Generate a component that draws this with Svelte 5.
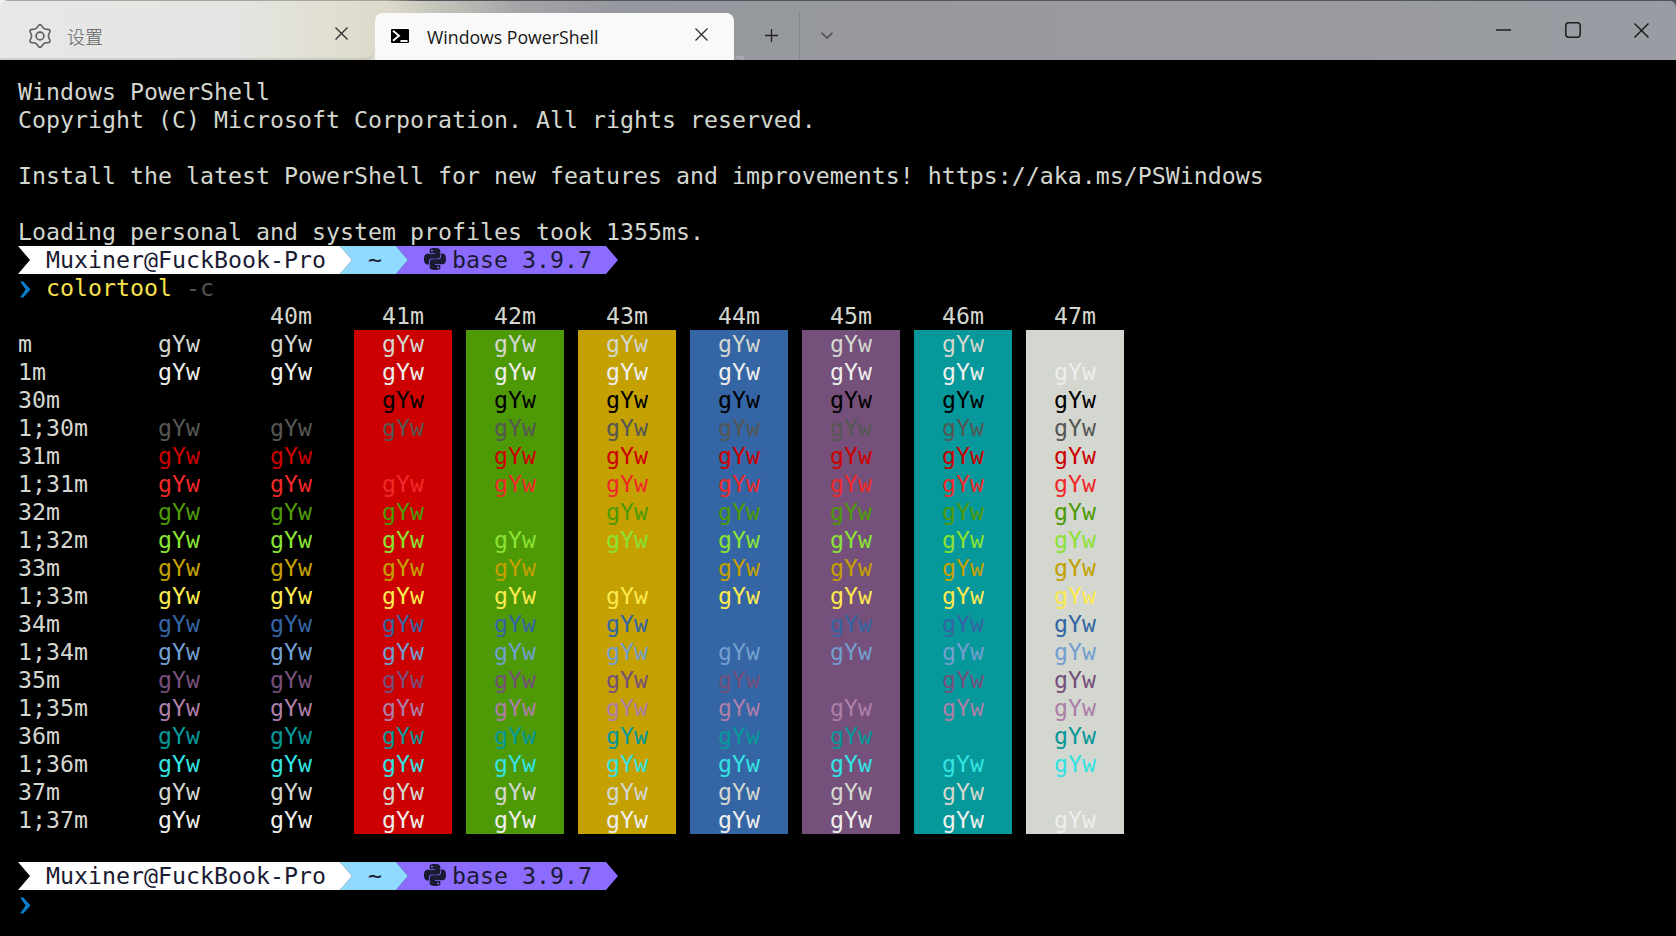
<script>
  const C = {
    def: '#d3d7cf', bright: '#eeeeec', black: '#000000', gray: '#555753',
    red: '#cc0000', bred: '#ef2929', green: '#4e9a06', bgreen: '#8ae234',
    yellow: '#c4a000', byellow: '#fce94f', blue: '#3465a4', bblue: '#729fcf',
    purple: '#75507b', bpurple: '#ad7fa8', cyan: '#06989a', bcyan: '#34e2e2'
  };
  const rows = [
    ['m', C.def], ['1m', C.bright], ['30m', C.black], ['1;30m', C.gray],
    ['31m', C.red], ['1;31m', C.bred], ['32m', C.green], ['1;32m', C.bgreen],
    ['33m', C.yellow], ['1;33m', C.byellow], ['34m', C.blue], ['1;34m', C.bblue],
    ['35m', C.purple], ['1;35m', C.bpurple], ['36m', C.cyan], ['1;36m', C.bcyan],
    ['37m', C.def], ['1;37m', C.bright]
  ];
  const columns = [
    ['', 'transparent'], ['40m', 'transparent'], ['41m', C.red], ['42m', C.green],
    ['43m', C.yellow], ['44m', C.blue], ['45m', C.purple], ['46m', C.cyan], ['47m', C.def]
  ];
  const gearPoints = [];
  for (let i = 0; i < 72; i++) {
    const t = (i / 72) * Math.PI * 2;
    const r = 9.7 + 1.45 * Math.cos(6 * t) + 0.25 * Math.cos(12 * t);
    gearPoints.push(`${(12 + r * Math.sin(t)).toFixed(2)},${(12 - r * Math.cos(t)).toFixed(2)}`);
  }
  const gear = gearPoints.join(' ');
  const python = 'M14.25.18l.9.2.73.26.59.3.45.32.34.34.25.34.16.33.1.3.04.26.02.2-.01.13V8.5l-.05.63-.13.55-.21.46-.26.38-.3.31-.33.25-.35.19-.35.14-.33.1-.3.07-.26.04-.21.02H8.77l-.69.05-.59.14-.5.22-.41.27-.33.32-.27.35-.2.36-.15.37-.1.35-.07.32-.04.27-.02.21v3.06H3.17l-.21-.03-.28-.07-.32-.12-.35-.18-.36-.26-.36-.36-.35-.46-.32-.59-.28-.73-.21-.88-.14-1.05-.05-1.23.06-1.22.16-1.04.24-.87.32-.71.36-.57.4-.44.42-.33.42-.24.4-.16.36-.1.32-.05.24-.01h.16l.06.01h8.16v-.83H6.18l-.01-2.75-.02-.37.05-.34.11-.31.17-.28.25-.26.31-.23.38-.2.44-.18.51-.15.58-.12.64-.1.71-.06.77-.04.84-.02 1.27.05zm-6.3 1.98l-.23.33-.08.41.08.41.23.34.33.22.41.09.41-.09.33-.22.23-.34.08-.41-.08-.41-.23-.33-.33-.22-.41-.09-.41.09zm13.09 3.95l.28.06.32.12.35.18.36.27.36.35.35.47.32.59.28.73.21.88.14 1.04.05 1.23-.06 1.23-.16 1.04-.24.86-.32.71-.36.57-.4.45-.42.33-.42.24-.4.16-.36.09-.32.05-.24.02-.16-.01h-8.22v.82h5.84l.01 2.76.02.36-.05.34-.11.31-.17.29-.25.25-.31.24-.38.2-.44.17-.51.15-.58.13-.64.09-.71.07-.77.04-.84.01-1.27-.04-1.07-.14-.9-.2-.73-.25-.59-.3-.45-.33-.34-.34-.25-.34-.16-.33-.1-.3-.04-.25-.02-.2.01-.13v-5.34l.05-.64.13-.54.21-.46.26-.38.3-.32.33-.24.35-.2.35-.14.33-.1.3-.06.26-.04.21-.02.13-.01h5.84l.69-.05.59-.14.5-.21.41-.28.33-.32.27-.35.2-.36.15-.36.1-.35.07-.32.04-.28.02-.21V6.07h2.09l.14.01zm-6.47 14.25l-.23.33-.08.41.08.41.23.33.33.23.41.08.41-.08.33-.23.23-.33.08-.41-.08-.41-.23-.33-.33-.23-.41-.08-.41.08z';
</script>

{#snippet closeIcon()}
  <svg class="x" viewBox="0 0 13 13" width="13" height="13"><path d="M.5.5l12 12M12.5.5l-12 12" /></svg>
{/snippet}

{#snippet prompt()}
  <div class="line prompt">
    <span class="seg white">Muxiner@FuckBook-Pro</span>
    <span class="seg sky">~</span>
    <span class="seg violet">
      <span class="py"><svg viewBox="0 0 24 24" width="22" height="22"><path d={python} /></svg></span>base 3.9.7
    </span>
  </div>
{/snippet}

{#snippet chevron()}
  <span class="cell2"><svg viewBox="0 0 11 17" width="11" height="17"><path d="M0 0.500h3.400l7 8-7 8H0l5.800-8z" /></svg></span>
{/snippet}

<div class="app">
  <header class="titlebar">
    <div class="tab inactive">
      <svg class="gear" viewBox="0 0 24 24" width="24" height="24">
        <polygon points={gear} />
        <circle cx="12" cy="12" r="3.9" />
      </svg>
      <span class="label cjk">设置</span>
      {@render closeIcon()}
    </div>
    <div class="tab active">
      <svg class="ps" viewBox="0 0 20 16" width="20" height="16">
        <rect width="20" height="16" rx="2" fill="#000" />
        <path d="M3 2.800l6 5-6 5" />
        <path d="M10.500 13h7" />
      </svg>
      <span class="label">Windows PowerShell</span>
      {@render closeIcon()}
    </div>
    <div class="tools">
      <button class="tool plus" aria-label="new tab">
        <svg viewBox="0 0 15 15" width="15" height="15"><path d="M7.5 1v13M1 7.5h13" /></svg>
      </button>
      <span class="sep"></span>
      <button class="tool more" aria-label="more">
        <svg viewBox="0 0 12 7" width="12" height="7"><path d="M.5.7L6 6 11.500.7" /></svg>
      </button>
    </div>
    <div class="caption">
      <button aria-label="minimize"><svg viewBox="0 0 15 15" width="15" height="15"><path d="M0 7h15" /></svg></button>
      <button aria-label="maximize"><svg viewBox="0 0 16 16" width="16" height="16"><rect x=".8" y=".8" width="14.400" height="14.400" rx="3" /></svg></button>
      <button aria-label="close"><svg viewBox="0 0 15 15" width="15" height="15"><path d="M.5.5l14 14M14.500.5l-14 14" /></svg></button>
    </div>
  </header>

  <main class="term">
    <div class="line">Windows PowerShell</div>
    <div class="line">Copyright (C) Microsoft Corporation. All rights reserved.</div>
    <div class="line"></div>
    <div class="line">Install the latest PowerShell for new features and improvements! https://aka.ms/PSWindows</div>
    <div class="line"></div>
    <div class="line">Loading personal and system profiles took 1355ms.</div>
    {@render prompt()}
    <div class="line cmd">{@render chevron()}<span class="yellow">colortool</span> <span class="dim">-c</span></div>

    <div class="table">
      <div class="cell"></div>
      {#each columns as col}
        <div class="cell pad">{col[0]}</div>
      {/each}
      {#each rows as row}
        <div class="cell">{row[0]}</div>
        {#each columns as col}
          <div class="cell pad" style="background:{col[1]};color:{row[1]}">gYw</div>
        {/each}
      {/each}
    </div>

    <div class="line"></div>
    {@render prompt()}
    <div class="line cmd">{@render chevron()}</div>
  </main>
</div>

<style>
  :global(body) { margin: 0; background: #000; }
  .app {
    width: 1676px; height: 936px; overflow: hidden; background: linear-gradient(90deg, #f2f2f2 0 50%, #4e5056 50%);
    display: flex; flex-direction: column;
  }
  .titlebar {
    height: 60px; flex: none; display: flex; align-items: flex-end; border-radius: 8px 8px 0 0; box-sizing: border-box;
    background:
      linear-gradient(90deg, #a9a9a5 0, #a5a59d 385px, #52555b 420px) top / 100% 1px no-repeat,
      linear-gradient(90deg, #e7e7e7 0, #e4e4e2 240px, #e1dfd1 330px, #dcd9ca 390px, #c4c3ba 440px, #a3a4a6 520px, #96989f 620px, #989a9f 1100px, #9a9ca3 1676px);
  }
  .tab { display: flex; align-items: center; height: 47px; box-sizing: border-box; flex: none; position: relative; }
  .inactive {
    width: 373px; margin-right: 2px; padding-left: 28px; padding-bottom: 2px; border-bottom-right-radius: 6px;
    box-shadow: inset 0 -2px 0 rgba(150, 150, 140, .28);
  }
  .gear { fill: none; stroke: #5e5e5e; stroke-width: 1.6; stroke-linejoin: round; margin-top: 1px; flex: none; }
  .label { font: 18px "Open Sans", "Noto Sans", sans-serif; color: #1f1f1f; }
  .cjk { font: 300 18px "Noto Sans CJK SC", sans-serif; color: #5e5e5e; margin-left: 15px; width: 268px; flex: none; }
  .x { fill: none; stroke: #2e2e2e; stroke-width: 1.3; flex: none; margin-top: -5px; }
  .active { width: 359px; background: #f9f9f9; border-radius: 8px 8px 0 0; padding-left: 15px; }
  .active::after {
    content: ""; position: absolute; left: 100%; bottom: 0; width: 10px; height: 4px;
    border-bottom-left-radius: 10px 4px; background: rgba(255, 255, 255, .16);
  }
  .ps { flex: none; margin-right: 17px; fill: none; stroke: #fff; stroke-width: 1.9; margin-top: -1px; }
  .active .label { width: 268px; flex: none; white-space: nowrap; font-size: 17.700px; color: #161616; }
  .tools { display: flex; align-items: center; height: 49px; margin-left: 30px; }
  .tool { border: 0; padding: 0; background: none; display: flex; }
  .plus { margin-top: -1px; }
  .plus svg, .more svg { fill: none; }
  .plus svg { stroke: #222; stroke-width: 1.300; }
  .sep { width: 1px; height: 49px; background: rgba(0, 0, 0, .11); margin: 0 21px 0 20px; }
  .more svg { stroke: #444; stroke-width: 1.300; }
  .caption { margin-left: auto; display: flex; height: 60px; }
  .caption button { width: 69px; height: 60px; border: 0; padding: 0; background: none; display: flex; align-items: center; justify-content: center; }
  .caption svg { fill: none; stroke: #1c1c1c; stroke-width: 1.500; }
  .term {
    flex: 1; background: #000; padding: 18px 0 0 18px; color: #d3d7cf;
    font: 23.25px/28px "DejaVu Sans Mono", monospace;
  }
  .line { height: 28px; white-space: pre; }
  .cmd { display: flex; }
  .cell2 { width: 28px; display: flex; align-items: center; height: 28px; padding-left: 2px; box-sizing: border-box; padding-top: 3px; flex: none; }
  .cell2 svg { fill: #0a7fd0; }
  .yellow { color: #f9e24c; }
  .dim { color: #555753; margin-left: 14px; }
  .table { display: grid; grid-template-columns: repeat(10, 98px); column-gap: 14px; grid-auto-rows: 28px; }
  .cell { white-space: pre; }
  .pad { padding-left: 28px; box-sizing: border-box; }
  .prompt { display: flex; }
  .seg {
    display: flex; height: 28px; padding: 0 26px 0 28px; color: #1a1a33; white-space: pre; margin-left: -12px; flex: none;
    clip-path: polygon(0 0, calc(100% - 12px) 0, 100% 50%, calc(100% - 12px) 100%, 0 100%, 12px 50%);
  }
  .white { background: #fff; margin-left: 0; position: relative; z-index: 3; }
  .sky { background: #90d9ff; position: relative; z-index: 2; }
  .violet { background: #8c6cff; }
  .py { width: 28px; display: flex; align-items: center; height: 28px; }
  .py svg { fill: #1a1a33; margin-top: -2px; }
</style>
